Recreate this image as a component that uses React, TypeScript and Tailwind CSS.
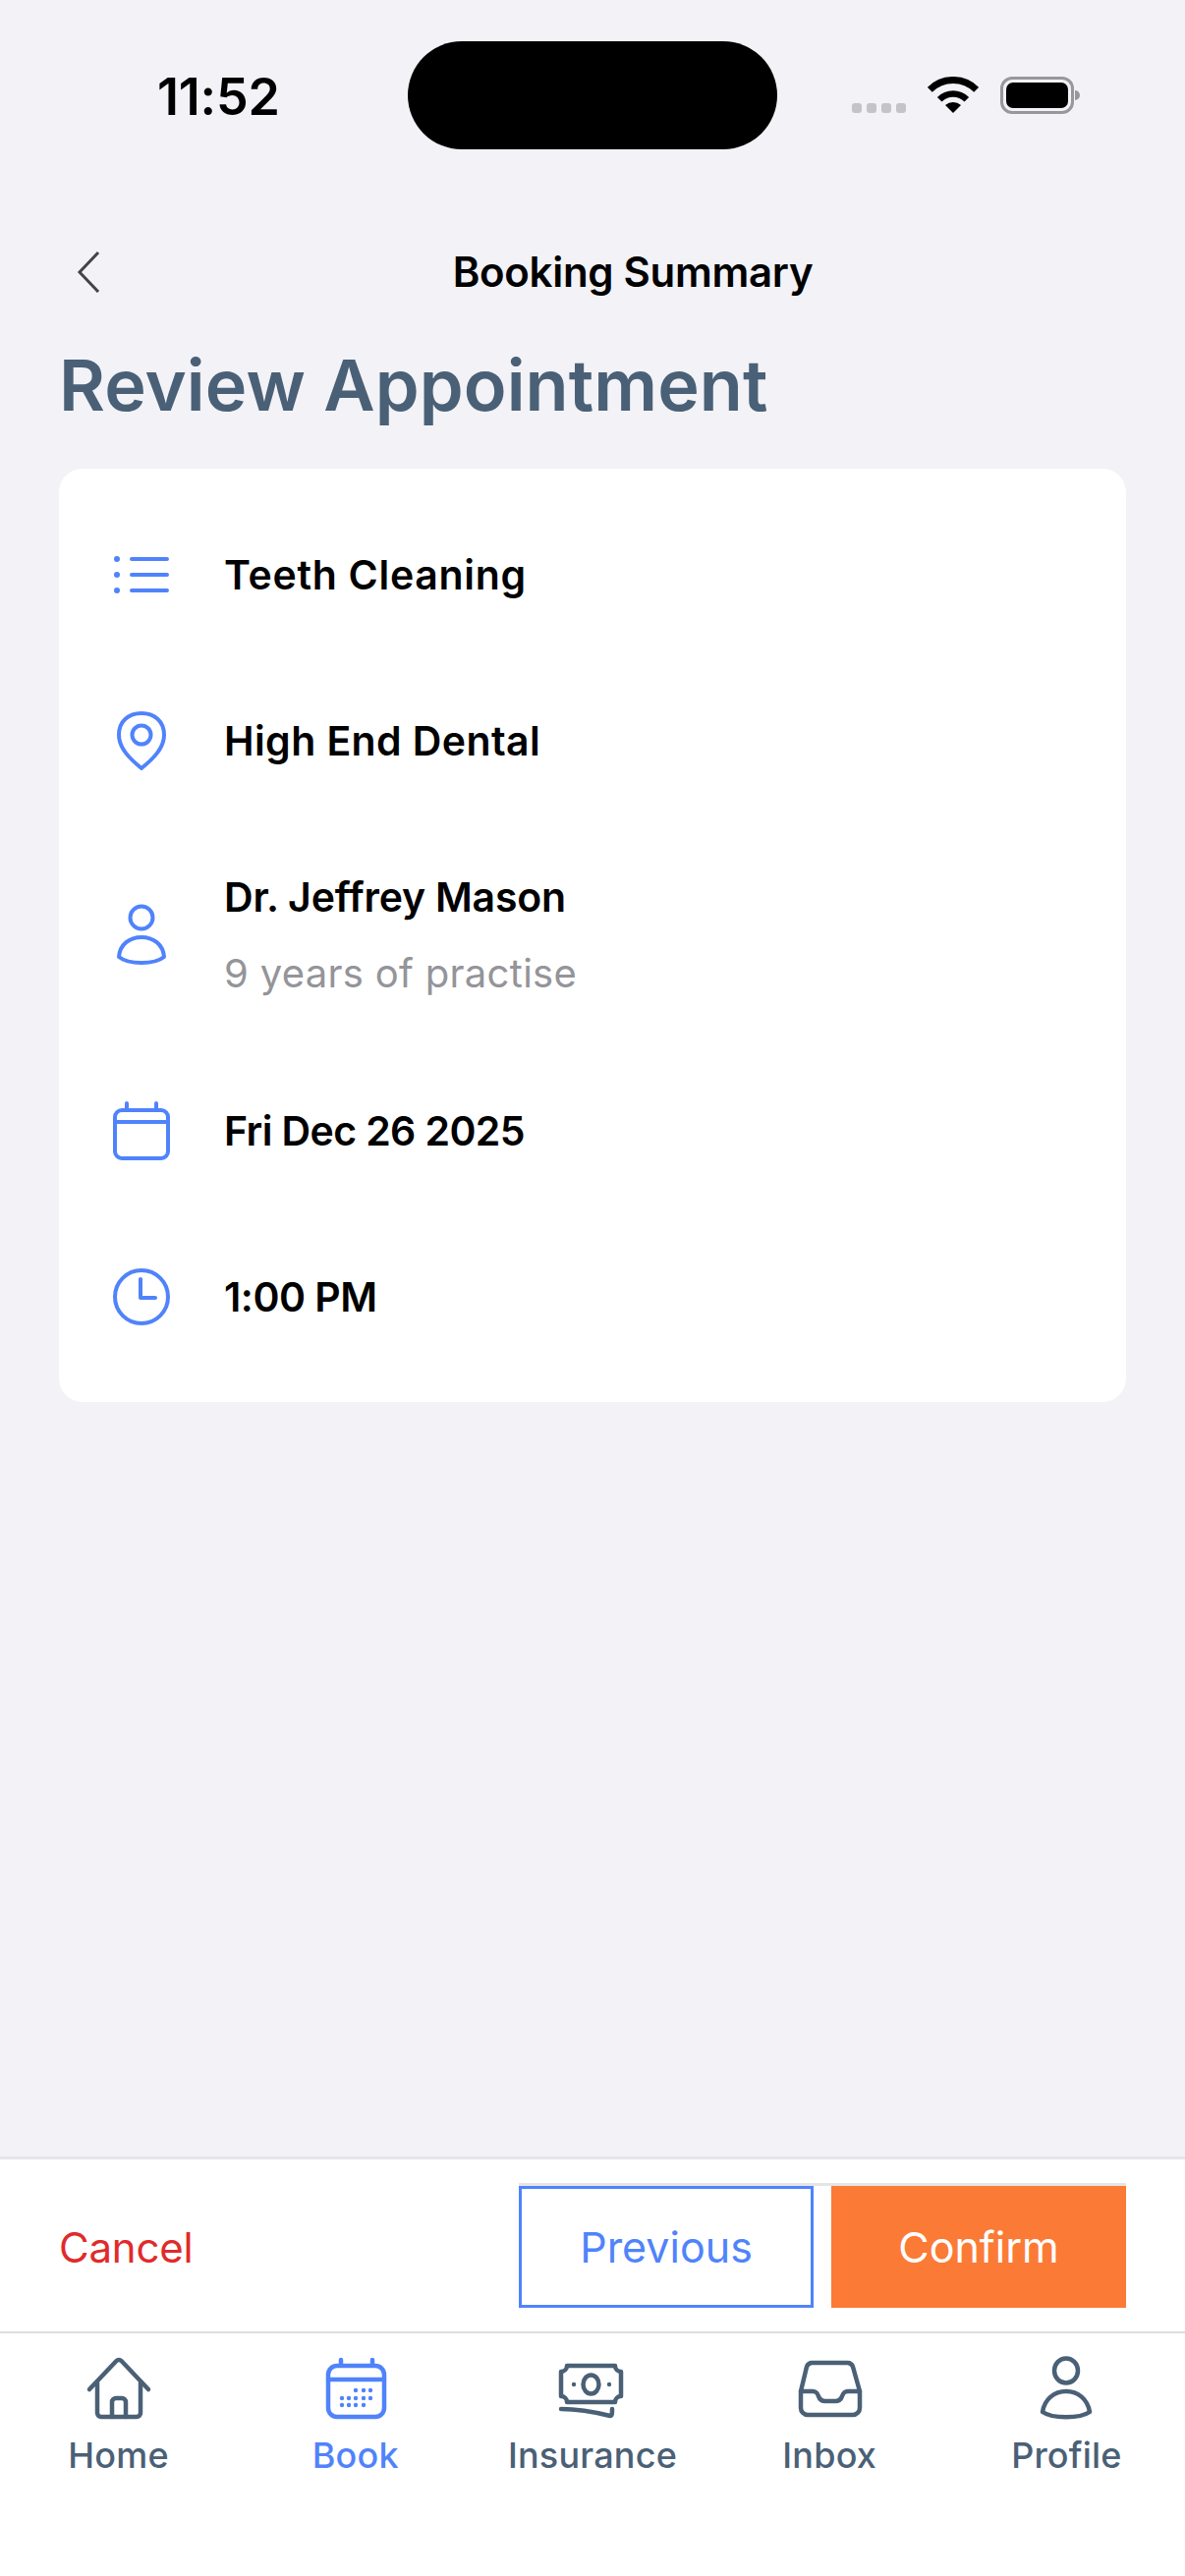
const font = { fontFamily: '"Inter", "Noto Sans", sans-serif' };

function ListIcon() {
  return (
    <svg width="60" height="40" viewBox="0 0 60 40" fill="none" stroke="#5083fb" strokeWidth="4" strokeLinecap="round">
      <circle cx="5" cy="4" r="3" fill="#5083fb" stroke="none" />
      <circle cx="5" cy="20" r="3" fill="#5083fb" stroke="none" />
      <circle cx="5" cy="36" r="3" fill="#5083fb" stroke="none" />
      <path d="M20 4H56M20 20H56M20 36H56" />
    </svg>
  );
}

function PinIcon() {
  return (
    <svg width="60" height="62" viewBox="0 0 60 62" fill="none" stroke="#5083fb" strokeWidth="4">
      <path d="M30 59C19 50 7 39 7 25C7 11 17 3 30 3C43 3 53 11 53 25C53 39 41 50 30 59Z" strokeLinejoin="round" />
      <circle cx="30" cy="25" r="9.5" />
    </svg>
  );
}

function PersonIcon() {
  return (
    <svg width="60" height="64" viewBox="0 0 60 64" fill="none" stroke="#5083fb" strokeWidth="4" strokeLinejoin="round">
      <circle cx="30" cy="14" r="11.5" />
      <path d="M7 54C8 41 18 34 30 34C42 34 52 41 53 54C43 62 17 62 7 54Z" />
    </svg>
  );
}

function CalendarIcon() {
  return (
    <svg width="60" height="60" viewBox="0 0 60 60" fill="none" stroke="#5083fb" strokeWidth="4" strokeLinecap="round">
      <rect x="3" y="9" width="54" height="49" rx="7" />
      <path d="M3 21H57M15 2V8M45 2V8" />
    </svg>
  );
}

function ClockIcon() {
  return (
    <svg width="60" height="60" viewBox="0 0 60 60" fill="none" stroke="#5083fb" strokeWidth="4" strokeLinecap="round" strokeLinejoin="round">
      <circle cx="30" cy="30" r="27" />
      <path d="M29 12V31H44" />
    </svg>
  );
}

function HomeIcon() {
  return (
    <svg width="72" height="66" viewBox="0 0 72 66" fill="none" stroke="currentColor" strokeWidth="4.5" strokeLinecap="round" strokeLinejoin="round">
      <path d="M6 34L33.5 5a3.5 3.5 0 0 1 5 0L66 34" />
      <path d="M14 27V58a4 4 0 0 0 4 4H54a4 4 0 0 0 4-4V27" />
      <path d="M29 62V47a4 4 0 0 1 4-4h6a4 4 0 0 1 4 4V62" />
    </svg>
  );
}

function BookIcon() {
  const dots = [
    [36, 35], [44, 35], [51, 35],
    [22, 43], [29, 43], [36, 43], [44, 43], [51, 43],
    [22, 50], [29, 50], [36, 50], [44, 50],
  ];
  return (
    <svg width="72" height="66" viewBox="0 0 72 66" fill="none" stroke="currentColor" strokeWidth="4.5" strokeLinecap="round">
      <rect x="8" y="10" width="57" height="52" rx="9" />
      <path d="M8 24H65M21 4V9M53 4V9" />
      {dots.map(([x, y]) => (
        <circle key={`${x}-${y}`} cx={x} cy={y} r="2.2" fill="currentColor" stroke="none" />
      ))}
    </svg>
  );
}

function InsuranceIcon() {
  return (
    <svg width="72" height="66" viewBox="0 0 72 66" fill="none" stroke="currentColor" strokeWidth="4.5" strokeLinecap="round" strokeLinejoin="round">
      <path d="M10 10H59a6 6 0 0 0 6 6V41a6 6 0 0 0-6 6H10a6 6 0 0 0-6-6V16a6 6 0 0 0 6-6Z" />
      <ellipse cx="34.5" cy="29" rx="8" ry="9.5" />
      <circle cx="17" cy="29" r="2.2" fill="currentColor" stroke="none" />
      <circle cx="53" cy="29" r="2.2" fill="currentColor" stroke="none" />
      <path d="M4 54C22 54 38 57 54 61C56 61 56 58 56 54" />
    </svg>
  );
}

function InboxIcon() {
  return (
    <svg width="72" height="66" viewBox="0 0 72 66" fill="none" stroke="currentColor" strokeWidth="4.5" strokeLinecap="round" strokeLinejoin="round">
      <path d="M7 36L13 11a6 6 0 0 1 6-4H54a6 6 0 0 1 6 4L67 36V53a7 7 0 0 1-7 7H14a7 7 0 0 1-7-7Z" />
      <path d="M7 36H19c4 0 5 2 6 5c1 3 3 5 7 5h10c4 0 6-2 7-5c1-3 2-5 6-5H67" />
    </svg>
  );
}

function ProfileIcon() {
  return (
    <svg width="72" height="66" viewBox="0 0 72 66" fill="none" stroke="currentColor" strokeWidth="4.5" strokeLinejoin="round">
      <ellipse cx="36" cy="15" rx="12" ry="12.5" />
      <path d="M12 57C14 44 24 36 36 36C48 36 58 44 60 57C50 64 22 64 12 57Z" />
    </svg>
  );
}

function StatusIcons() {
  return (
    <div className="flex items-end">
      <div className="mb-px flex gap-[5px]">
        {[0, 1, 2, 3].map((i) => (
          <span key={i} className="h-[10px] w-[10px] rounded-[3px] bg-[#c4c4c8]"></span>
        ))}
      </div>
      <svg className="ml-[22px]" width="52" height="38" viewBox="0 0 52 38" fill="none" stroke="#000">
        <path d="M2.3 13.3A33.5 33.5 0 0 1 49.7 13.3" strokeWidth="7" />
        <path d="M12.2 23.2A19.5 19.5 0 0 1 39.8 23.2" strokeWidth="6.5" />
        <path d="M26 37L18 29A12 12 0 0 1 34 29Z" fill="#000" stroke="none" />
      </svg>
      <div className="ml-[22px] flex items-center">
        <div className="flex h-[38px] w-[75px] items-center justify-center rounded-[12px] border-[3px] border-[#98989c] p-[3px]">
          <div className="h-full w-full rounded-[7px] bg-black"></div>
        </div>
        <span className="ml-px h-[10px] w-[5px] rounded-r-full bg-[#98989c]"></span>
      </div>
    </div>
  );
}

function Row({ icon, title, sub, tall, tracking }: { icon: React.ReactNode; title: string; sub?: string; tall?: boolean; tracking: string }) {
  return (
    <div className={`flex items-center ${tall ? "h-[228px]" : "h-[169px]"}`}>
      <div className="mr-[54px] flex w-[60px] shrink-0 justify-center">{icon}</div>
      <div>
        <p className={`text-[41px] leading-[50px] font-semibold text-black ${tracking}`}>{title}</p>
        {sub && <p className="mt-[28px] text-[40px] leading-[50px] font-normal tracking-[0.3px] text-[#949499]">{sub}</p>}
      </div>
    </div>
  );
}

const tabs = [
  { label: "Home", icon: <HomeIcon /> },
  { label: "Book", icon: <BookIcon />, active: true },
  { label: "Insurance", icon: <InsuranceIcon /> },
  { label: "Inbox", icon: <InboxIcon /> },
  { label: "Profile", icon: <ProfileIcon /> },
];

export default function App() {
  return (
    <div className="flex h-[2622px] w-full flex-col bg-[#f2f2f7]" style={font}>
      {/* Status bar */}
      <div className="mt-[42px] flex h-[110px] shrink-0 items-center">
        <div className="w-[415px] pt-[3px] pl-[160px] text-[52px] leading-[60px] font-semibold tracking-[-0.2px] text-black">11:52</div>
        <div className="h-[110px] w-[376px] rounded-[55px] bg-black"></div>
        <div className="flex h-full flex-1 items-center justify-end pr-[107px]">
          <StatusIcons />
        </div>
      </div>

      {/* Header */}
      <div className="mt-[95px] flex h-[60px] shrink-0 items-center px-[60px]">
        <div className="w-[82px]">
          <svg className="ml-[18px]" width="24" height="42" viewBox="0 0 24 42" fill="none" stroke="#444448" strokeWidth="3">
            <path d="M22 1L3 21L22 41" />
          </svg>
        </div>
        <h2 className="flex-1 text-center text-[42px] leading-[60px] font-semibold tracking-[-0.3px] text-black">Booking Summary</h2>
      </div>

      <h1 className="mt-[40px] px-[60px] text-[72px] leading-[90px] font-semibold tracking-[0.1px] text-[#4a6076]">Review Appointment</h1>

      {/* Appointment details */}
      <div className="mx-[60px] mt-[40px] rounded-[24px] bg-white py-[23px] pl-[54px]">
        <Row icon={<ListIcon />} title="Teeth Cleaning" tracking="tracking-[0.7px]" />
        <Row icon={<PinIcon />} title="High End Dental" tracking="tracking-[0.4px]" />
        <Row icon={<PersonIcon />} title="Dr. Jeffrey Mason" sub="9 years of practise" tall tracking="tracking-[-0.2px]" />
        <Row icon={<CalendarIcon />} title="Fri Dec 26 2025" tracking="tracking-[-0.6px]" />
        <Row icon={<ClockIcon />} title="1:00 PM" tracking="tracking-[-0.5px]" />
      </div>

      <div className="flex-1"></div>

      {/* Action bar */}
      <div className="flex h-[178px] shrink-0 items-start justify-between border-t-[3px] border-[#e5e5ea] bg-white px-[60px] pt-[24px]">
        <span className="mt-[36px] text-[42px] leading-[60px] tracking-[-0.2px] text-[#e02b2b]">Cancel</span>
        <div className="flex gap-[18px] border-t-[3px] border-[#e5e5e5]">
          <button className="h-[124px] w-[300px] border-[3px] border-[#5083fb] text-[43px] text-[#5083fb]">Previous</button>
          <button className="h-[124px] w-[300px] bg-[#fb7a36] text-[43px] text-white">Confirm</button>
        </div>
      </div>

      {/* Tab bar */}
      <div className="grid h-[249px] shrink-0 grid-cols-5 border-t-2 border-[#dddddf] bg-white pt-[23px]">
        {tabs.map((tab) => (
          <div key={tab.label} className={`flex flex-col items-center ${tab.active ? "text-[#5083fb]" : "text-[#4a6076]"}`}>
            {tab.icon}
            <span className="mt-[13px] text-[36px] leading-[44px] font-medium tracking-[0.2px]">{tab.label}</span>
          </div>
        ))}
      </div>
    </div>
  );
}
